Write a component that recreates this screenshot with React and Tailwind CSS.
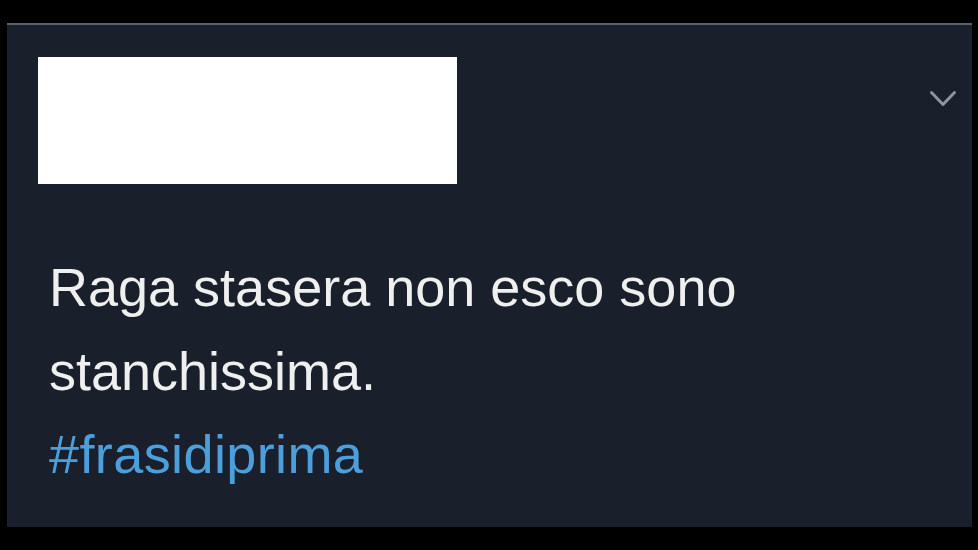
export default function App() {
  return (
    <div className="w-[978px] h-[550px] bg-black overflow-hidden" style={{ fontFamily: '"Liberation Sans", Arial, sans-serif' }}>
      <div className="ml-[7px] mt-[23px] w-[965px] h-[504px] bg-[#19202b] border-t-2 border-[#5a6069] flex flex-col pl-[31px] pr-[15px] pt-[32px]">
        <div className="flex justify-between">
          <div className="w-[419px] h-[127px] bg-white" />
          <svg className="mt-[33px]" width="28" height="18" viewBox="0 0 28 18" fill="none">
            <path d="M2.5 2.5 L14 14.5 L25.5 2.5" stroke="#8d949c" strokeWidth="3" strokeLinecap="round" strokeLinejoin="round" />
          </svg>
        </div>
        <div className="mt-[62px] pl-[11px] text-[54px] leading-[83.5px] text-[#efefef]">
          <div>Raga stasera non esco sono</div>
          <div>stanchissima.</div>
          <div className="text-[#4d9fdc] tracking-[0.4px]">#frasidiprima</div>
        </div>
      </div>
    </div>
  );
}
